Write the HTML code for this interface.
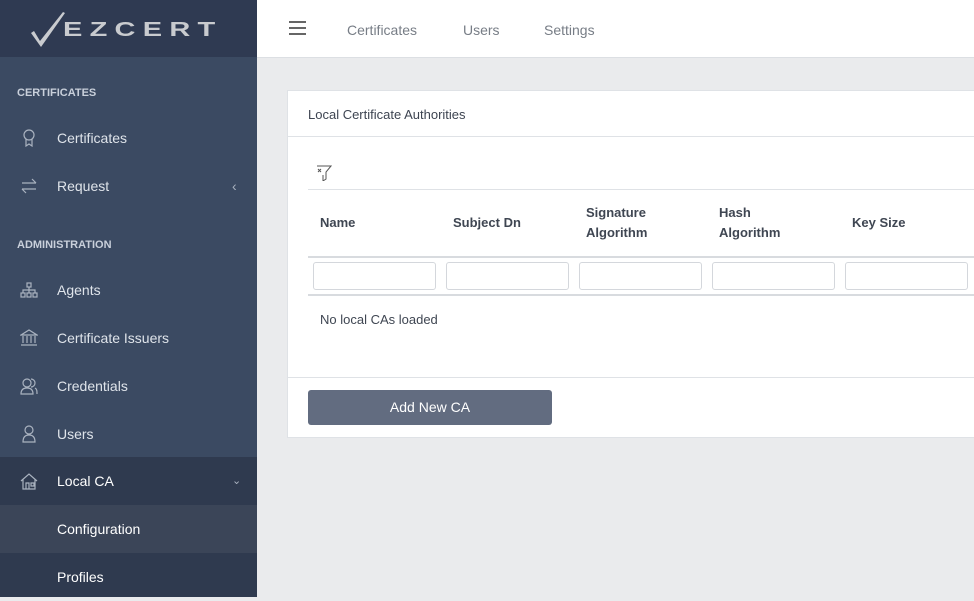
<!DOCTYPE html>
<html><head><style>
*{box-sizing:border-box;margin:0;padding:0}
body{width:974px;height:597px;overflow:hidden;font-family:"Liberation Sans",sans-serif;background:#eaebed;position:relative;font-size:14px}
.sb{position:absolute;left:0;top:0;width:257px;height:597px;background:#3b4a62}
.logo{height:57px;background:#2f3a52;position:relative}
.logo span{position:absolute;left:63px;top:19px;color:#c9cbcf;font-size:20px;font-weight:bold;letter-spacing:5px;font-family:"Liberation Sans",sans-serif;transform:scaleX(1.45);transform-origin:left}
.sec{position:absolute;left:17px;color:#c9d0db;font-size:11px;font-weight:bold}
.it{position:absolute;left:0;width:257px;height:48px;color:#dfe4ea;font-size:14px;line-height:48px;padding-left:57px}
.it svg{position:absolute;left:20px;top:15px}
.top{position:absolute;left:257px;top:0;right:0;height:58px;background:#fff;border-bottom:1px solid #dcdfe3}
.top a{position:absolute;top:22px;color:#777d86;font-size:14px}
.card{position:absolute;left:287px;top:90px;width:700px;height:348px;background:#fff;border:1px solid #dfe2e6}
.hd{height:46px;border-bottom:1px solid #dfe2e6;padding:16px 20px;font-size:13px;color:#3d4451}
.th{position:absolute;font-size:13px;font-weight:bold;color:#3f4652;line-height:20px}
.inp{position:absolute;top:171px;width:123px;height:28px;border:1px solid #d4d7dc;border-radius:3px}
</style></head><body>
<div class="sb">
<div class="logo"><svg style="position:absolute;left:30px;top:11px" width="36" height="38"><path d="M1 22 L4 20 L10 30 L33 1 L35 2 L11 36 Z" fill="#c9cbcf"/></svg><span>EZCERT</span></div>
<div class="sec" style="top:87px">CERTIFICATES</div>
<div class="it" style="top:114px"><svg width="18" height="18" fill="none" stroke="#aab3c0" stroke-width="1.2"><circle cx="9" cy="6" r="5"/><path d="M6 10v7l3-2 3 2v-7"/></svg>Certificates</div>
<div class="it" style="top:162px"><svg width="18" height="18" fill="none" stroke="#aab3c0" stroke-width="1.2"><path d="M2 6h14M12 2l4 4M16 12H2M6 16l-4-4"/></svg>Request<span style="position:absolute;left:232px;color:#aab3c0">‹</span></div>
<div class="sec" style="top:239px">ADMINISTRATION</div>
<div class="it" style="top:266px"><svg width="18" height="18" fill="none" stroke="#aab3c0" stroke-width="1.2"><rect x="7" y="2" width="4" height="4"/><rect x="1" y="12" width="4" height="4"/><rect x="7" y="12" width="4" height="4"/><rect x="13" y="12" width="4" height="4"/><path d="M9 6v6M3 12V9h12v3"/></svg>Agents</div>
<div class="it" style="top:314px"><svg width="18" height="18" fill="none" stroke="#aab3c0" stroke-width="1.2"><path d="M1 6L9 1l8 5zM3 7v7M7 7v7M11 7v7M15 7v7M1 16h16"/></svg>Certificate Issuers</div>
<div class="it" style="top:362px"><svg width="18" height="18" fill="none" stroke="#aab3c0" stroke-width="1.2"><circle cx="7" cy="6" r="4"/><path d="M1 17c0-5 3-6 6-6s6 1 6 6zM11 2a4 4 0 0 1 0 8M15 11c2 1 2 3 2 6"/></svg>Credentials</div>
<div class="it" style="top:410px"><svg width="18" height="18" fill="none" stroke="#aab3c0" stroke-width="1.2"><circle cx="9" cy="5" r="4"/><path d="M3 17c0-5 2-7 6-7s6 2 6 7z"/></svg>Users</div>
<div class="it" style="top:457px;background:#2f3a4f;color:#fff"><svg width="18" height="18" fill="none" stroke="#aab3c0" stroke-width="1.2"><path d="M1 9l8-7 8 7M3 7v10h12V7M6 17v-6h3v6M11 11h3v3h-3z"/></svg>Local CA<span style="position:absolute;left:232px;color:#aab3c0;font-size:11px">⌄</span></div>
<div class="it" style="top:505px;background:#3b4558;color:#fff">Configuration</div>
<div class="it" style="top:553px;height:44px;background:#2f3a4f;color:#fff">Profiles</div>
</div>
<div class="top">
<div style="position:absolute;left:32px;top:21px;width:17px;height:2px;background:#666;box-shadow:0 6px 0 #666,0 12px 0 #666"></div>
<a style="left:90px">Certificates</a><a style="left:206px">Users</a><a style="left:287px">Settings</a>
</div>
<div class="card">
<div class="hd">Local Certificate Authorities</div>
<svg style="position:absolute;left:28px;top:74px" width="16" height="16" fill="none" stroke="#555" stroke-width="1"><path d="M1 1h14L10 7v7l-3 2v-6"/><path d="M2 4l3 3M5 4L2 7"/></svg>
<div style="position:absolute;left:20px;right:0;top:98px;border-top:1px solid #dfe2e6"></div>
<div class="th" style="left:32px;top:122px">Name</div>
<div class="th" style="left:165px;top:122px">Subject Dn</div>
<div class="th" style="left:298px;top:112px">Signature<br>Algorithm</div>
<div class="th" style="left:431px;top:112px">Hash<br>Algorithm</div>
<div class="th" style="left:564px;top:122px">Key Size</div>
<div style="position:absolute;left:20px;right:0;top:165px;border-top:2px solid #d8dbdf"></div>
<div class="inp" style="left:25px"></div><div class="inp" style="left:158px"></div><div class="inp" style="left:291px"></div><div class="inp" style="left:424px"></div><div class="inp" style="left:557px"></div>
<div style="position:absolute;left:20px;right:0;top:203px;border-top:2px solid #d8dbdf"></div>
<div style="position:absolute;left:32px;top:221px;font-size:13px;color:#3f4652">No local CAs loaded</div>
<div style="position:absolute;left:0;right:0;top:286px;border-top:1px solid #dfe2e6"></div>
<div style="position:absolute;left:20px;top:299px;width:244px;height:35px;background:#626c80;border-radius:3px;color:#fff;font-size:14px;text-align:center;line-height:35px">Add New CA</div>
</div>
</body></html>
